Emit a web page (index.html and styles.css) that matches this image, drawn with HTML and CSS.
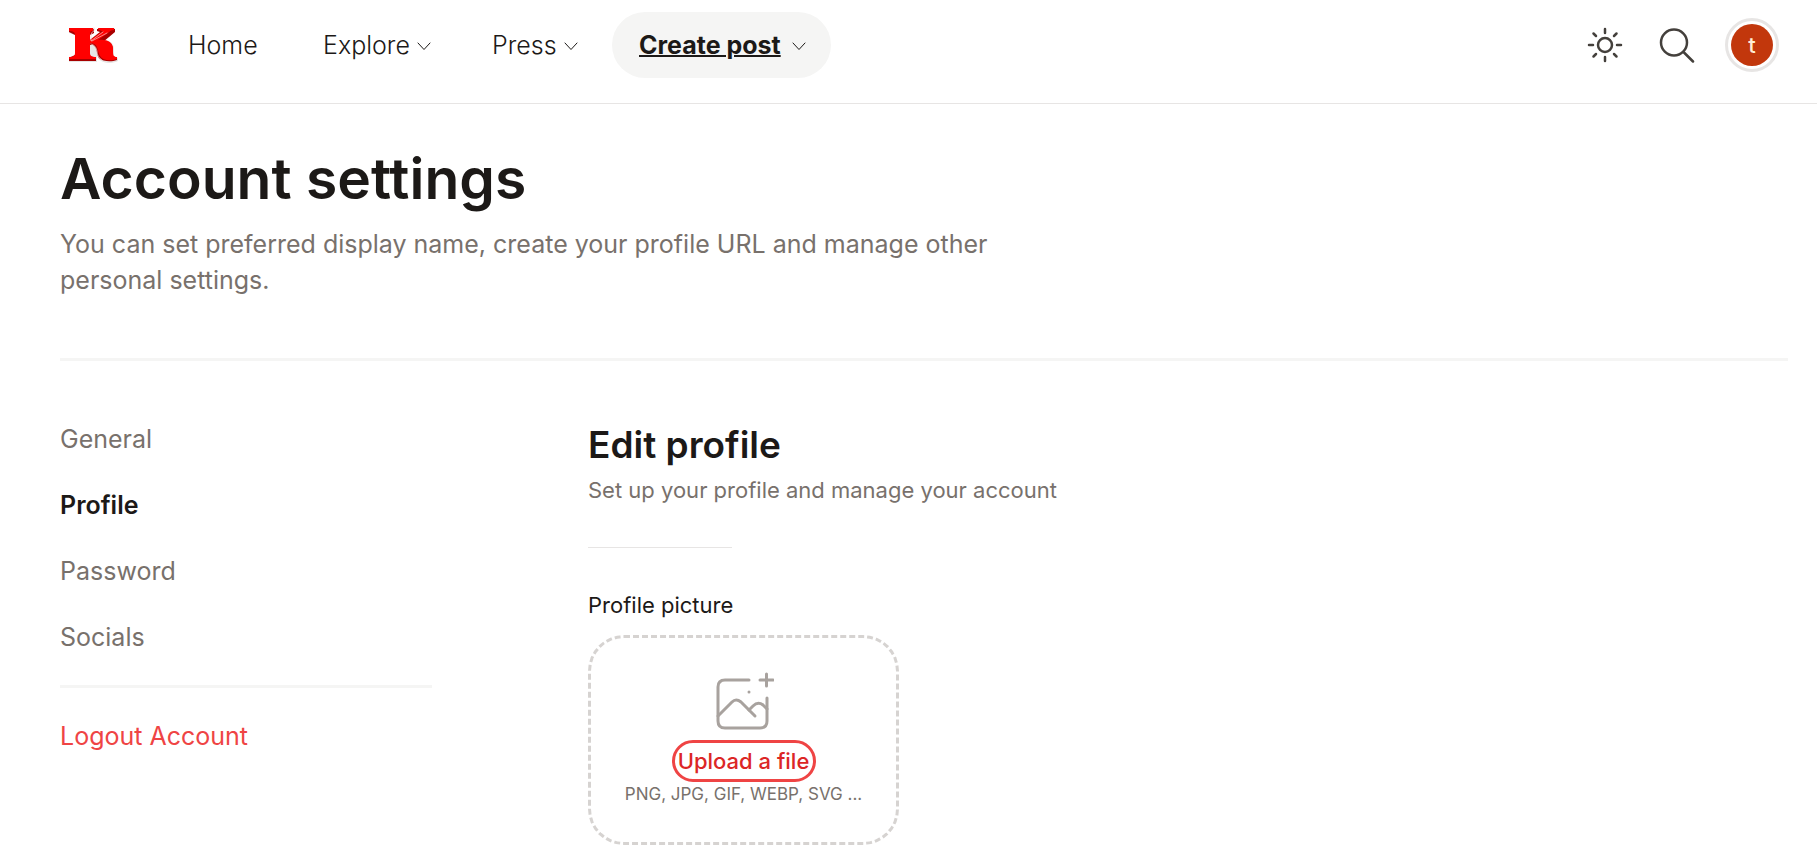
FILE: index.html
```html
<!doctype html>
<html lang="en">
  <head>
    <meta charset="UTF-8" />
    <meta name="viewport" content="width=device-width, initial-scale=1.0" />
    <title>Account settings</title>
    <link rel="stylesheet" href="styles.css">
  </head>
  <body>
    <header class="header">
      <a href="#" class="logo" aria-label="Homepage">
        <svg viewBox="0 0 50 36" width="50" height="36">
          <path class="logo-edge" d="M1 1H26V6L22 8V12L32 5L30 4V1H47V4L36 14C43 13 46 17 46 23V29L50 31V34C44 37 35 37 31 32L29 29V35H1V30L7 28V8L1 6Z" />
          <path class="logo-shade" d="M1 2H26V6L22 8V13L32 5L29 4V2H47V5L35 15C42 14 45 17 45 23V29L49 31V33C44 35 35 35 31 31C28 27 30 21 25 18H22V29L28 31V34H1V31L7 28V8L1 5Z" />
          <path class="logo-face" d="M1 1H25V4C22 4 22 6 22 8V13L35 4C33 4 30 3 30 1H46V3C43 3 42 4 40 6L30 13C39 12 45 15 45 22C45 28 45 30 49 30V32C43 34 35 34 32 29C29 24 31 17 23 16L22 17V26C22 29 24 30 28 30V32H1V30C5 30 7 29 7 26V8C7 5 5 4 1 4Z" />
          <path class="logo-line" d="M26 1V4Q23 5 23 8V14L35 5M23 17Q28 18 29 24Q29 30 34 33M24 14L39 6" />
        </svg>
      </a>
      <nav class="nav">
        <a href="#" class="nav-item">Home</a>
        <button type="button" class="nav-item">
          Explore
          <svg class="chevron" viewBox="0 0 14 9"><path d="M1 1L7 7.5L13 1" /></svg>
        </button>
        <button type="button" class="nav-item">
          Press
          <svg class="chevron" viewBox="0 0 14 9"><path d="M1 1L7 7.5L13 1" /></svg>
        </button>
        <button type="button" class="nav-item active">
          <span>Create post</span>
          <svg class="chevron" viewBox="0 0 14 9"><path d="M1 1L7 7.5L13 1" /></svg>
        </button>
      </nav>
      <div class="actions">
        <button type="button" class="icon-button" aria-label="Toggle theme">
          <svg viewBox="0 0 36 36" width="36" height="36">
            <circle cx="18" cy="18" r="7" />
            <path d="M18 2V6M18 30V34M2 18H6M30 18H34M6.5 6.5L9 9M27 27L29.5 29.5M6.5 29.5L9 27M27 9L29.5 6.5" />
          </svg>
        </button>
        <button type="button" class="icon-button" aria-label="Search">
          <svg viewBox="0 0 36 36" width="36" height="36">
            <circle cx="15" cy="15.5" r="13" />
            <path d="M25 25.5L34 34.5" />
          </svg>
        </button>
        <button type="button" class="avatar" aria-label="Account menu"><span>t</span></button>
      </div>
    </header>

    <main class="page">
      <div class="intro">
        <h1>Account settings</h1>
        <p>You can set preferred display name, create your profile URL and manage other personal settings.</p>
      </div>
      <div class="settings">
        <nav class="side-nav">
          <a href="#">General</a>
          <a href="#" class="current">Profile</a>
          <a href="#">Password</a>
          <a href="#">Socials</a>
          <hr />
          <a href="#" class="logout">Logout Account</a>
        </nav>
        <section class="profile">
          <h2>Edit profile</h2>
          <p class="subtitle">Set up your profile and manage your account</p>
          <hr />
          <h3>Profile picture</h3>
          <div class="dropzone">
            <svg class="upload-icon" viewBox="0 0 60 60" width="60" height="60">
              <path d="M35 9H11Q4 9 4 16V50Q4 57 11 57H46Q53 57 53 50V27" />
              <path d="M46 9H59M52.500 3V15" />
              <path d="M4 45L18 31Q22 27 27 31L41 45" />
              <path d="M35 39L39 35Q44 30 49 34L53 38" />
              <path d="M35 21H35" />
            </svg>
            <button type="button" class="upload">Upload a file</button>
            <p>PNG, JPG, GIF, WEBP, SVG ...</p>
          </div>
        </section>
      </div>
    </main>
  </body>
</html>
```

FILE: styles.css
```css
* {
  box-sizing: border-box;
}
body {
  margin: 0;
  font-family: Inter, "Open Sans", sans-serif;
  font-size: 25px;
  line-height: 36px;
  color: #1c1917;
  background: #fff;
}
h1,
h2,
h3,
p {
  margin: 0;
}
a {
  color: inherit;
  text-decoration: none;
}
button {
  font: inherit;
  color: inherit;
  border: 0;
  padding: 0;
  background: none;
  cursor: pointer;
}
svg {
  flex: none;
  fill: none;
  stroke: currentColor;
  stroke-linecap: round;
  stroke-linejoin: round;
}
.header {
  display: flex;
  align-items: flex-start;
  height: 104px;
  padding: 12px 38px 0 68px;
  border-bottom: 1px solid #e7e5e4;
}
.logo {
  display: flex;
  align-items: center;
  height: 66px;
  margin-right: 43px;
}
.logo svg {
  stroke: none;
}
.logo-edge {
  fill: #e7e5e4;
}
.logo-shade {
  fill: #a80000;
}
.logo-face {
  fill: #f00;
}
.logo .logo-line {
  stroke: #f3c4c4;
  stroke-width: 0.7;
}
.nav {
  display: grid;
  grid-template-columns: 126px 160px 138px 219px;
  gap: 9px;
}
.nav-item {
  display: flex;
  align-items: center;
  justify-content: space-between;
  height: 66px;
  padding: 0 25px 0 27px;
  border-radius: 33px;
  font-weight: 300;
  white-space: nowrap;
}
.nav-item.active {
  font-weight: 700;
  background: #f5f5f4;
}
.nav-item.active span {
  text-decoration: underline;
  text-decoration-thickness: 2px;
}
.chevron {
  width: 14px;
  height: 9px;
  margin-top: 2px;
}
.actions {
  display: flex;
  align-items: center;
  height: 66px;
  margin-left: auto;
  color: #44403c;
}
.icon-button {
  display: flex;
  margin-right: 36px;
}
.icon-button svg {
  stroke-width: 2.5;
}
.icon-button + .avatar {
  margin-left: -6px;
}
.avatar {
  width: 54px;
  height: 54px;
  padding: 3px;
  border: 3px solid #e7e5e4;
  border-radius: 50%;
}
.avatar span {
  display: block;
  height: 42px;
  border-radius: 50%;
  line-height: 42px;
  font-size: 22px;
  font-weight: 500;
  color: #ffedd5;
  background: #c2370c;
}
.page {
  padding: 48px 29px 15px 60px;
}
.intro {
  padding-bottom: 60px;
  border-bottom: 3px solid #f5f5f4;
}
.intro h1 {
  font-size: 57px;
  line-height: 54px;
  font-weight: 600;
}
.intro p {
  max-width: 960px;
  margin-top: 20px;
  color: #78716c;
}
.settings {
  display: flex;
  align-items: flex-start;
}
.side-nav {
  display: flex;
  flex-direction: column;
  gap: 30px;
  width: 372px;
  margin: 60px 156px 0 0;
  color: #78716c;
}
.side-nav hr {
  width: 100%;
  height: 3px;
  margin: 0;
  border: 0;
  background: #f5f5f4;
}
.side-nav .current {
  font-weight: 600;
  color: #1c1917;
}
.side-nav .logout {
  color: #ef4444;
}
.profile {
  margin-top: 61px;
}
.profile h2 {
  font-size: 37px;
  line-height: 45px;
  font-weight: 600;
}
.subtitle {
  margin-top: 8px;
  font-size: 22px;
  line-height: 30px;
  color: #78716c;
}
.profile hr {
  width: 144px;
  height: 1px;
  margin: 42px 0;
  border: 0;
  background: #e7e5e4;
}
.profile h3 {
  font-size: 22px;
  line-height: 30px;
  font-weight: 400;
}
.dropzone {
  display: flex;
  flex-direction: column;
  align-items: center;
  width: 311px;
  height: 210px;
  margin-top: 15px;
  padding-top: 33px;
  border: 3px dashed #d6d3d1;
  border-radius: 36px;
}
.upload-icon {
  color: #a8a29e;
  stroke-width: 3px;
}
.upload {
  width: 144px;
  height: 42px;
  margin-top: 9px;
  border: 3px solid #ef4444;
  border-radius: 21px;
  font-size: 22px;
  line-height: 36px;
  font-weight: 500;
  color: #dc2626;
  white-space: nowrap;
}
.dropzone p {
  font-size: 17px;
  line-height: 24px;
  color: #78716c;
}
```
